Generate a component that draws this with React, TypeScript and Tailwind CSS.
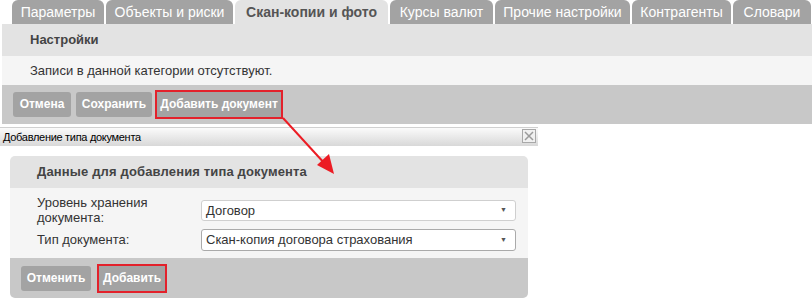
import React from "react";

const tabs = [
  { label: "Параметры", w: "w-[92px]" },
  { label: "Объекты и риски", w: "w-[127px]" },
  { label: "Скан-копии и фото", w: "w-[153px]", active: true },
  { label: "Курсы валют", w: "w-[103px]" },
  { label: "Прочие настройки", w: "w-[135px]" },
  { label: "Контрагенты", w: "w-[99px]" },
  { label: "Словари", w: "w-[78px]" },
];

function GreyButton({ children, className = "" }: { children: React.ReactNode; className?: string }) {
  return (
    <div
      className={`h-[25px] flex items-center justify-center rounded-[3px] bg-[#a3a3a3] text-white text-[12px] font-bold ${className}`}
    >
      {children}
    </div>
  );
}

export default function App() {
  return (
    <div
      className="relative w-[812px] h-[300px] overflow-hidden bg-white text-[#333]"
      style={{ fontFamily: '"Liberation Sans", Arial, sans-serif' }}
    >
      {/* Tabs */}
      <div className="flex gap-[2px] pl-[12px] h-[24px]">
        {tabs.map((t) => (
          <div
            key={t.label}
            className={`${t.w} shrink-0 h-[24px] rounded-t-[6px] flex items-center justify-center text-[14px] ${
              t.active ? "bg-[#e3e3e3] text-[#555] font-bold" : "bg-[#a3a3a3] text-white"
            }`}
          >
            {t.label}
          </div>
        ))}
      </div>

      {/* Settings panel */}
      <div className="ml-[2px]">
        <div className="h-[32px] bg-[#e3e3e3] flex items-center pl-[28px] text-[13px] font-bold text-[#444]">
          Настройки
        </div>
        <div className="h-[29px] bg-[#f5f5f5] flex items-center pl-[28px] text-[13px] text-[#333]">
          Записи в данной категории отсутствуют.
        </div>
        <div className="h-[39px] bg-[#c8c8c8] flex items-center gap-[5px] pl-[11px] pb-[1px]">
          <GreyButton className="w-[58px]">Отмена</GreyButton>
          <GreyButton className="w-[76px]">Сохранить</GreyButton>
          <div className="border-2 border-[#e3212b] -ml-[2px]">
            <GreyButton className="w-[124px] rounded-none">Добавить документ</GreyButton>
          </div>
        </div>
      </div>

      {/* Dialog */}
      <div className="mt-[3px] w-[538px]">
        <div className="relative h-[19px] border-t border-[#d0d0d0] bg-gradient-to-b from-[#fbfbfb] to-[#d8d8d8] flex items-center pl-[3px] text-[11px] tracking-[-0.3px] text-black">
          Добавление типа документа
          <div className="absolute right-[2px] top-[1px] w-[14px] h-[14px] border border-[#a8a8a8] bg-[#f0f0f0] flex items-center justify-center">
            <svg width="10" height="10" viewBox="0 0 10 10">
              <path d="M1 1 L9 9 M9 1 L1 9" stroke="#9a9a9a" strokeWidth="1.5" />
            </svg>
          </div>
        </div>

        <div className="mx-[10px] mt-[10px] rounded-[5px] overflow-hidden">
          <div className="h-[32px] bg-[#e3e3e3] flex items-center pl-[27px] text-[13px] font-bold text-[#444] tracking-[0.15px]">
            Данные для добавления типа документа
          </div>
          <div className="h-[70px] bg-[#f5f5f5] pl-[27px] pt-[7px] grid grid-cols-[164px_315px] content-start gap-y-[2px] text-[13px] text-[#333]">
            <div className="leading-[15px]">
              Уровень хранения
              <br />
              документа:
            </div>
            <div className="h-[21px] mt-[5px] bg-white border border-[#cfcfcf] rounded-[3px] flex items-center justify-between pl-[4px] pr-[8px]">
              <span>Договор</span>
              <span className="text-[7px] text-[#555]">▼</span>
            </div>
            <div className="leading-[15px] mt-[5px]">Тип документа:</div>
            <div className="h-[22px] mt-[2px] bg-white border border-[#aaa] rounded-[3px] flex items-center justify-between pl-[4px] pr-[8px]">
              <span>Скан-копия договора страхования</span>
              <span className="text-[7px] text-[#555]">▼</span>
            </div>
          </div>
          <div className="h-[40px] bg-[#c8c8c8] flex items-center gap-[6px] pl-[11px]">
            <GreyButton className="w-[70px]">Отменить</GreyButton>
            <div className="border-2 border-[#e3212b]">
              <GreyButton className="w-[66px] rounded-none">Добавить</GreyButton>
            </div>
          </div>
        </div>
      </div>

      {/* Red arrow */}
      <svg className="absolute left-0 top-0 pointer-events-none" width="812" height="300">
        <line x1="283" y1="118" x2="326" y2="165" stroke="#ec1c24" strokeWidth="2" />
        <polygon points="334,174 317,165 329,154" fill="#ec1c24" />
      </svg>
    </div>
  );
}
